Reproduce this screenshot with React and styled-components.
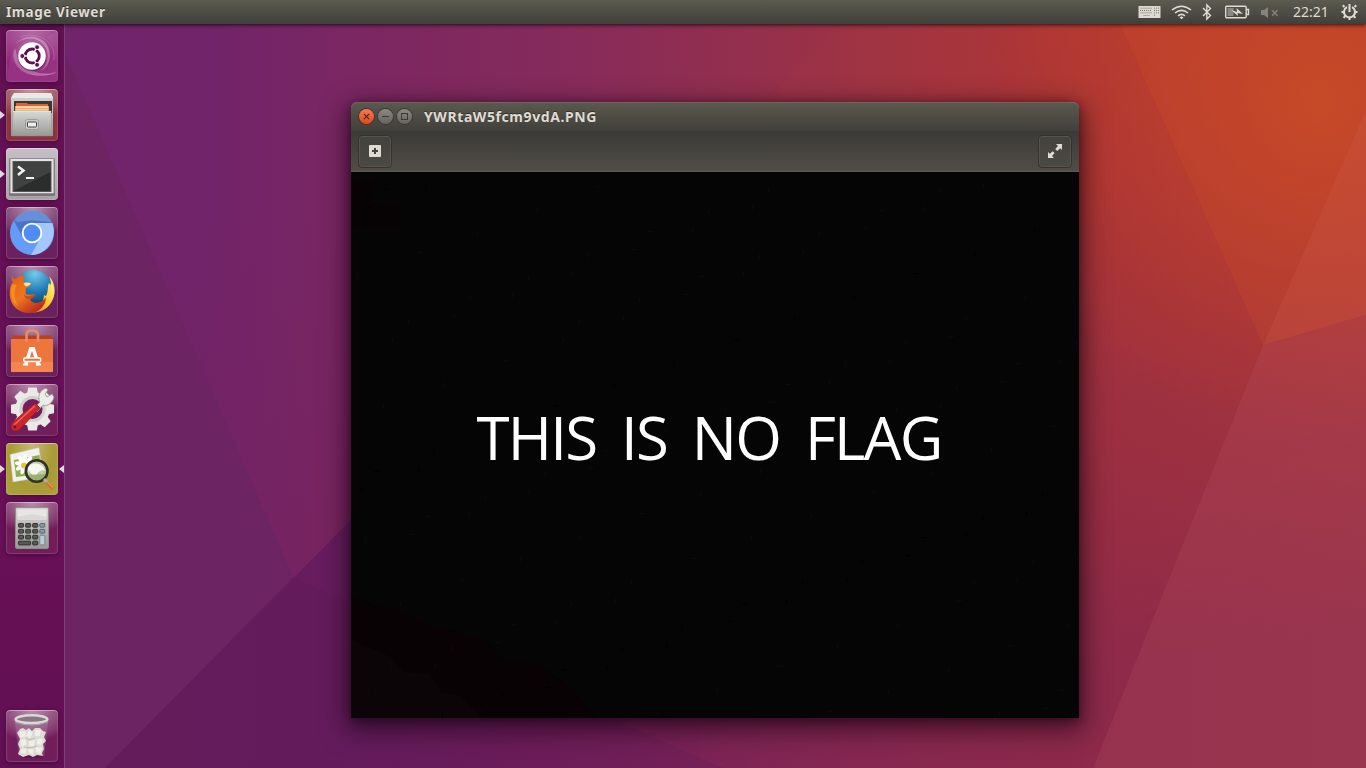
import React from "react";
import styled, { createGlobalStyle, css } from "styled-components";

const GlobalStyle = createGlobalStyle`
  html, body, #root { margin: 0; width: 100%; height: 100%; overflow: hidden; }
  * { box-sizing: border-box; }
`;

const Desktop = styled.div`
  position: relative;
  isolation: isolate;
  display: flex;
  flex-direction: column;
  width: 1366px;
  height: 768px;
  overflow: hidden;
  font-family: "Noto Sans", "Open Sans", sans-serif;
`;

const WallpaperArt = styled.svg`
  position: absolute;
  inset: 0;
  z-index: -1;
`;

const Panel = styled.header`
  position: relative;
  z-index: 2;
  display: flex;
  align-items: center;
  justify-content: space-between;
  flex: none;
  height: 24px;
  padding: 0 7px 0 6px;
  background: linear-gradient(#5c5b51, #403f3a);
  box-shadow: 0 1px 4px rgba(0, 0, 0, 0.75);
  color: #dfdbd2;
`;

const AppName = styled.span`
  font: 700 13.5px/24px "Noto Sans", sans-serif;
  letter-spacing: 0.56px;
  text-shadow: 0 -1px 0 rgba(0, 0, 0, 0.4);
`;

const Indicators = styled.div`
  display: flex;
  align-items: center;
`;

const Indicator = styled.svg`
  display: block;
  flex: none;
  margin-right: ${(p) => p.$gap}px;
`;

const Clock = styled.time`
  width: 37px;
  margin-right: 11px;
  font: 400 14px/24px "Noto Sans", sans-serif;
`;

const Workspace = styled.div`
  display: flex;
  flex: 1;
  min-height: 0;
`;

const Launcher = styled.nav`
  display: flex;
  flex-direction: column;
  justify-content: space-between;
  width: 65px;
  padding: 6px 0;
  background: linear-gradient(#611052, #690f59 60%, #621052);
  border-right: 1px solid #7c4079;
`;

const LauncherGroup = styled.div`
  display: flex;
  flex-direction: column;
  gap: 7px;
`;

const LauncherRow = styled.div`
  display: flex;
  align-items: center;
  justify-content: space-between;
  height: 52px;
`;

const pip = css`
  border-top: 4px solid transparent;
  border-bottom: 4px solid transparent;
`;

const RunningPip = styled.i`
  width: 6px;
  ${pip}
  border-left: 5px solid ${(p) => (p.$on ? "#dedade" : "transparent")};
`;

const FocusPip = styled.i`
  width: 6px;
  ${pip}
  border-right: 5px solid ${(p) => (p.$on ? "#dedade" : "transparent")};
`;

const Tile = styled.div`
  width: 52px;
  height: 52px;
  overflow: hidden;
  border-radius: 4px;
  background: ${(p) => p.$fill};
  box-shadow: inset 0 0 0 1px rgba(255, 255, 255, 0.14), inset 0 1px 0 rgba(255, 255, 255, 0.3),
    0 1px 4px rgba(0, 0, 0, 0.35);
  svg { display: block; }
`;

const Stage = styled.main`
  flex: 1;
  padding: 78px 0 0 286px;
`;

const Window = styled.section`
  display: flex;
  flex-direction: column;
  width: 728px;
  height: 616px;
  border-radius: 6px 6px 0 0;
  box-shadow: 0 8px 26px 4px rgba(15, 0, 12, 0.6), 0 2px 8px rgba(15, 0, 12, 0.4);
`;

const TitleBar = styled.div`
  display: flex;
  align-items: center;
  flex: none;
  height: 29px;
  padding-left: 8px;
  border-radius: 6px 6px 0 0;
  background: linear-gradient(#5b594f, #403f3a);
  box-shadow: inset 0 1px 0 #6b695f;
`;

const WindowButton = styled.span`
  display: flex;
  width: 15px;
  height: 15px;
  margin-right: 4px;
  border-radius: 50%;
  background: ${(p) => (p.$close ? "linear-gradient(#f57b53, #df4b17)" : "linear-gradient(#8b8981, #65635b)")};
  box-shadow: 0 0 0 1px ${(p) => (p.$close ? "#45352c" : "#3a3934")};
`;

const Title = styled.h1`
  margin: 1px 0 0 8px;
  color: #dfdbd2;
  font: 700 14px/28px "Noto Sans", sans-serif;
  letter-spacing: 0.58px;
  text-shadow: 0 -1px 0 rgba(0, 0, 0, 0.4);
`;

const ToolBar = styled.div`
  display: flex;
  align-items: flex-start;
  justify-content: space-between;
  flex: none;
  height: 41px;
  padding: 4px 7px 0;
  background: linear-gradient(#3b3a36, #504e46);
  border-bottom: 1px solid #5c5a52;
`;

const ToolButton = styled.span`
  display: flex;
  width: 34px;
  height: 33px;
  border: 1px solid #34332f;
  border-radius: 4px;
  background: linear-gradient(#43423d, #4a4942);
  box-shadow: inset 0 0 0 1px #55534c;
  svg { display: block; margin: -1px; }
`;

const Picture = styled.div`
  position: relative;
  display: flex;
  justify-content: center;
  flex: 1;
  background: #050505;
  overflow: hidden;
`;

const Noise = styled.svg`
  position: absolute;
  inset: 0;
`;

const Message = styled.div`
  position: relative;
  width: 476px;
  padding-top: 221px;
  margin-left: -1px;
  color: #fff;
  font: 400 60px/88px "Open Sans", sans-serif;
  white-space: pre;
  letter-spacing: -1.8px;
  word-spacing: 11px;
`;

function Wallpaper() {
  return (
    <WallpaperArt width="1366" height="768">
      <defs>
        <linearGradient id="base" gradientUnits="userSpaceOnUse" x1="0" y1="0" x2="1366" y2="0">
          <stop offset="0" stopColor="#70246b" />
          <stop offset="0.15" stopColor="#71246a" />
          <stop offset="0.26" stopColor="#7b2762" />
          <stop offset="0.42" stopColor="#862b5b" />
          <stop offset="0.62" stopColor="#9c3245" />
          <stop offset="0.82" stopColor="#b43830" />
          <stop offset="1" stopColor="#c0412d" />
        </linearGradient>
        <linearGradient id="low" gradientUnits="userSpaceOnUse" x1="500" y1="150" x2="620" y2="768">
          <stop offset="0" stopColor="#74205a" stopOpacity="0" />
          <stop offset="1" stopColor="#74205a" stopOpacity="0.64" />
        </linearGradient>
        <radialGradient id="glow" gradientUnits="userSpaceOnUse" cx="1320" cy="100" r="330">
          <stop offset="0" stopColor="#c64927" />
          <stop offset="0.4" stopColor="#c24329" stopOpacity="0.6" />
          <stop offset="1" stopColor="#bc3c2a" stopOpacity="0" />
        </radialGradient>
        <linearGradient id="plum" gradientUnits="userSpaceOnUse" x1="100" y1="0" x2="1000" y2="0">
          <stop offset="0" stopColor="#671d5d" />
          <stop offset="0.3" stopColor="#671c5f" />
          <stop offset="0.5" stopColor="#701e5a" />
          <stop offset="1" stopColor="#8a2850" stopOpacity="0" />
        </linearGradient>
        <linearGradient id="ridge" gradientUnits="userSpaceOnUse" x1="293" y1="0" x2="723" y2="0">
          <stop offset="0" stopColor="#5f1a56" stopOpacity="0.35" />
          <stop offset="1" stopColor="#641b54" stopOpacity="0.3" />
        </linearGradient>
      </defs>
      <rect width="1366" height="768" fill="url(#base)" />
      <rect width="1366" height="768" fill="url(#low)" />
      <rect width="1366" height="768" fill="url(#glow)" />
      <path d="M0 0 64 52 293 577 105 768H0Z" fill="#6c2463" />
      <path d="M842 24H1120L1263 345 1093 768H700V167Z" fill="#b33b3d" opacity=".08" />
      <path d="M351 520 105 768H1093V520Z" fill="url(#plum)" />
      <path d="M293 577 723 768H105Z" fill="url(#ridge)" />
      <path d="M1120 24H1366V110L1263 345Z" fill="#c84e29" opacity=".26" />
      <path d="M1366 110V315L1263 345Z" fill="#ce563e" opacity=".42" />
      <path d="M1263 345 1366 315V768H1093Z" fill="#b8525c" opacity=".26" />
    </WallpaperArt>
  );
}

const Icon = ({ children }) => (
  <svg width="52" height="52" viewBox="0 0 52 52">
    <defs>
      <linearGradient id="metal" x1="0" y1="0" x2="0" y2="1">
        <stop stopColor="#d8d8d6" />
        <stop offset="1" stopColor="#989895" />
      </linearGradient>
    </defs>
    {children}
  </svg>
);

const DashIcon = () => (
  <Icon>
    <path d="M2 50C1 18 20 3 36 11 48 18 43 36 33 41 48 35 52 20 41 7L51 1V51H3Z" fill="#fff" opacity=".06" />
    <path d="M9 15C19 1 44 5 44 26 44 34 39 39 34 41 46 33 44 12 28 9 19 8 12 11 9 15Z" fill="#fff" opacity=".3" />
    <path d="M9 18C3 36 22 52 51 43 30 46 14 38 11 26Z" fill="#fff" opacity=".26" />
    <path d="M14 7C30 1 50 10 48 30M8 20C4 40 26 51 50 42" fill="none" stroke="#e5a5d4" strokeOpacity=".3" />
    <circle cx="26" cy="27" r="14.2" fill="#430c3b" opacity=".4" />
    <circle cx="26" cy="26" r="13.8" fill="#fff" />
    <circle cx="26.2" cy="26" r="7" fill="none" stroke="#5e1049" strokeWidth="3" />
    <path d="M26 26 16 26M26 26 31 17M26 26 31 35" stroke="#fff" strokeWidth="1.4" />
    <circle cx="26.2" cy="26" r="5.3" fill="#fff" />
    {[[16.3, 26], [31.1, 17.2], [31.1, 34.8]].map(([x, y]) => (
      <circle key={y} cx={x} cy={y} r="2.4" fill="#5e1049" stroke="#fff" strokeWidth=".8" />
    ))}
  </Icon>
);

const FilesIcon = () => (
  <Icon>
    <path d="M8 4H45L47 9V47H5V9Z" fill="url(#metal)" />
    <path d="M8 4H45L47 9H5Z" fill="#e9e9e7" />
    <path d="M8 12H46V24H8Z" fill="#393836" />
    <path d="M10 14H21L22 15H42V22H10Z" fill="#d8632d" />
    <path d="M9 17H43V24H9Z" fill="#f2a45b" />
    <path d="M10 17.5H42V18.7H10ZM10 20.5H42V21.5H10Z" fill="#fff0d9" />
    <path d="M7 22H45L46 47H6Z" fill="url(#metal)" stroke="#8f8f8c" strokeWidth=".5" />
    <path d="M7 22.5H45" stroke="#e3e3e2" />
    <rect x="19.5" y="30.5" width="13" height="10" rx="2" fill="#cacac7" stroke="#9d9d98" />
    <rect x="21.5" y="33" width="9" height="5" rx="1" fill="#eee" stroke="#444" />
  </Icon>
);

const TerminalIcon = () => (
  <Icon>
    <rect x="3" y="10" width="46" height="38" rx="1.5" fill="#77747a" />
    <rect x="4" y="10.5" width="44" height="35" rx="1" fill="#e4e4e2" stroke="#8e8d8e" />
    <rect x="7" y="13.5" width="38" height="30" fill="#2b2d2c" stroke="#555" />
    <path d="M7.5 14H44.5V24L7.5 43Z" fill="#fff" opacity=".1" />
    <path d="M12 18.5 17.5 22.5 12 27" fill="none" stroke="#f2f2ef" strokeWidth="2.5" />
    <path d="M20 30H28" stroke="#f2f2ef" strokeWidth="2" />
  </Icon>
);

const ChromiumIcon = () => (
  <Icon>
    <circle cx="26" cy="26" r="22" fill="#659cf7" />
    <path d="M8 14C17-1 40 1 46.5 16H26L17 31Z" fill="#4a72c6" />
    <path d="M8.5 13.5C17-1 38 0 45.5 15L26 13.5 12 15Z" fill="#7fa2e4" opacity=".6" />
    <path d="M26 16H46.4C52 31 41 48 25 48L35 30Z" fill="#a3c6fc" />
    <circle cx="26" cy="26" r="10.3" fill="#fff" />
    <circle cx="26" cy="26" r="8.4" fill="#4f8df4" />
  </Icon>
);

const FirefoxIcon = () => (
  <Icon>
    <defs>
      <radialGradient id="globe" cx=".55" cy=".1" r=".9">
        <stop stopColor="#72cce9" />
        <stop offset=".5" stopColor="#247eb9" />
        <stop offset="1" stopColor="#07345f" />
      </radialGradient>
      <linearGradient id="fox" x1="0" y1="0" x2=".7" y2="1">
        <stop stopColor="#e0600f" />
        <stop offset=".55" stopColor="#ef7521" />
        <stop offset="1" stopColor="#b9291c" />
      </linearGradient>
      <linearGradient id="tail" x1="1" y1="0" x2="0" y2="1">
        <stop stopColor="#fff59a" />
        <stop offset=".55" stopColor="#ffc62c" />
        <stop offset="1" stopColor="#e65317" />
      </linearGradient>
    </defs>
    <circle cx="27" cy="23" r="19" fill="url(#globe)" />
    <path d="M43 10C49 17 50 26 47 33 43 43 33 48 23 46 33 43 38 36 38 29L40 30C43 24 41 21 43 17L45 19C45 15 44 13 43 10Z" fill="url(#tail)" />
    <path d="M6 9C7 13 9 14 11 12 14 9 16 9 19 9 17 12 17 14 18 16L25 17C25 20 22 21 20 22 20 24 19 25 20 28 24 30 27 27 30 29 28 31 26 32 24 34 29 39 36 37 40 31 40 41 31 48 22 47 9 46 2 35 4 23 4 20 6 18 7 16 5 14 6 11 6 9Z" fill="url(#fox)" />
    <path d="M19 16.5 25 17C24 19.5 22 20 20 20.5L17.5 18Z" fill="#ffe3a2" />
    <path d="M6 18C3 27 6 36 12 40 7 31 8 24 11 19Z" fill="#ffad28" opacity=".5" />
    <path d="M18 28C22 33 27 28 30 29L26 33C21 34 18 32 18 28Z" fill="#9f3c16" opacity=".5" />
  </Icon>
);

const SoftwareIcon = () => (
  <Icon>
    <path d="M7 10.5H45L47 15H5Z" fill="#b8421c" />
    <path d="M5 14H47V47H5Z" fill="#ed763e" />
    <path d="M5 37H47V47H5Z" fill="#ff9861" opacity=".45" />
    <path d="M20.5 17V9Q20.5 5.5 25.8 5.5T32 9V17" fill="none" stroke="#e78c6c" strokeWidth="2.5" />
    <path d="M19.6 40 24.7 23.7H27.3L32.4 40" fill="none" stroke="#fff" strokeWidth="3.6" />
    <path d="M17 39.5H22M30 39.5H35" stroke="#fff" strokeWidth="2" />
    <rect x="17.8" y="33" width="16.8" height="3.4" rx="1" fill="#ed6f35" stroke="#fff" strokeWidth="1.5" />
  </Icon>
);

const SettingsIcon = () => (
  <Icon>
    <g fill="#e9e9e6">
      {[0, 45, 90, 135, 180, 225, 270, 315].map((a) => (
        <path key={a} d="M21 10 22.2 3.5H30.8L32 10Z" transform={`rotate(${a} 26.5 25)`} />
      ))}
      <circle cx="26.5" cy="25" r="17.3" />
    </g>
    <circle cx="26.5" cy="25" r="13" fill="#d0d0cd" />
    <circle cx="26.5" cy="25" r="10" fill="#751c60" />
    <path d="M27 25 34 18C31 12 34 6 40 4L42 6 39 10 41 13 46 10 48 13C47 19 41 23 37 21L31 28Z" fill="#ecece9" stroke="#94948f" strokeWidth=".8" />
    <path d="M29 19 34 24 14 45C9 50 2 45 6 39Z" fill="#cc2629" stroke="#8f1820" strokeWidth=".8" />
    <path d="M29 21.8 8 41" stroke="#ee6260" strokeWidth="1.5" />
    <circle cx="9" cy="42.8" r="1.4" fill="#5a1739" />
  </Icon>
);

const ViewerIcon = () => (
  <Icon>
    <path d="M4 11.5 33 4.5 37 34 7 39Z" fill="#f1f2eb" stroke="#c3c3b8" strokeWidth=".5" />
    <path d="M8 17 33.5 12 35 31 10 34Z" fill="#8eaf4b" />
    <g fill="#fff">
      {[0, 40, 80, 120, 160, 200, 240, 280, 320].map((a) => (
        <ellipse key={a} cx="19" cy="15.8" rx="2.2" ry="4.6" transform={`rotate(${a} 19 21.5)`} />
      ))}
    </g>
    <circle cx="18" cy="22.5" r="3" fill="#efc526" />
    <circle cx="30.7" cy="28" r="10.5" fill="#c9cda8" opacity=".85" />
    <path d="M21 26C26 17 38 20 39 28 35 25 31 31 29 33 25 32 24 28 21 26Z" fill="#fff" opacity=".85" />
    <path d="M21 32 39 31C38 36 34 38 30 38 26 38 23 36 21 32Z" fill="#90a95e" opacity=".8" />
    <circle cx="30.7" cy="28" r="10.8" fill="none" stroke="#2c3030" strokeWidth="2.6" />
    <path d="M38 36 42 40" stroke="#b0b0aa" strokeWidth="3" />
    <path d="M40.5 39 47 46" stroke="#ca7735" strokeWidth="4" />
    <path d="M41 38.5 47 44.5" stroke="#ecb077" strokeWidth="1" />
  </Icon>
);

const CalculatorIcon = () => (
  <Icon>
    <rect x="9.5" y="5.5" width="33" height="41" rx="1.5" fill="url(#metal)" stroke="#8d8f8b" />
    <rect x="11.5" y="7.5" width="29" height="10.5" rx="1" fill="#e6e6e3" />
    <path d="M12 15Q26 10 40 15V18H12Z" fill="#cacaca" opacity=".5" />
    {[0, 1, 2, 3].flatMap((r) =>
      [0, 1, 2, 3].map((c) => {
        if ((c === 3 && r > 1) || (r === 3 && c < 2)) return null;
        return <rect key={`${r}-${c}`} x={12.5 + c * 7.1} y={21.5 + r * 5.9} width="5" height="3.7" rx=".7" fill={c === 3 ? "#8797a7" : "#555957"} stroke={c === 3 ? "#5c6a75" : "#30332f"} />;
      })
    )}
    <rect x="12.5" y="39.2" width="12.1" height="3.7" rx=".7" fill="#555957" stroke="#30332f" />
    <rect x="33.8" y="33.3" width="5" height="9.6" rx=".7" fill="#bdcbd5" stroke="#778590" />
  </Icon>
);

const TrashIcon = () => (
  <Icon>
    <path d="M9 10H42L38 46Q25 51 13 46Z" fill="#e0d3e0" opacity=".16" stroke="#ded7de" strokeOpacity=".5" />
    <ellipse cx="25.5" cy="46" rx="12" ry="2.4" fill="#4c0b3e" opacity=".7" />
    <path d="M11 23 14 19 17 18 20 20 23 18 26 21 29 18 34 18 37 21 40 22 38 27 40 31 37 34 38 39 36 43 37 46 31 45 27 47 23 45 17 47 12 44 14 39 12 34 14 29Z" fill="#dcdbd4" />
    <path d="M14 21 20 22 19 27 14 27ZM23 20 27 23 24 28 20 26ZM29 20 35 20 34 26 29 26ZM14 30 19 29 21 34 16 37ZM23 31 29 30 28 36 23 36ZM31 29 37 29 35 35 31 34ZM15 39 20 38 20 44 15 43ZM22 39 28 39 27 45 23 43ZM30 37 36 38 34 44 30 42Z" fill="#efeee8" />
    <path d="M20 28 23 30 29 28M18 37 24 38 31 36" stroke="#b4b2aa" fill="none" strokeWidth=".8" />
    <ellipse cx="25.5" cy="9.2" rx="15.8" ry="3.9" fill="#8a7587" stroke="#d9d9d5" strokeWidth="2.6" />
    <path d="M9 12Q25 18 42 12" fill="none" stroke="#a3a49d" strokeWidth="1.2" />
  </Icon>
);

const glass = (color) => `radial-gradient(80% 60% at 50% 0, rgba(255,255,255,.5), rgba(255,255,255,.12) 80%, transparent), ${color}`;

const apps = [
  { id: "dash", Art: DashIcon, fill: "radial-gradient(90% 70% at 50% 0, rgba(255,255,255,.32), transparent), #91267c" },
  { id: "files", Art: FilesIcon, fill: glass("#8b343f"), running: true },
  { id: "terminal", Art: TerminalIcon, fill: "linear-gradient(#c6bfc6, #aaa1a9)", running: true },
  { id: "chromium", Art: ChromiumIcon, fill: glass("#6b215d") },
  { id: "firefox", Art: FirefoxIcon, fill: glass("#6b215d") },
  { id: "software", Art: SoftwareIcon, fill: glass("#6b215d") },
  { id: "settings", Art: SettingsIcon, fill: glass("#721e5c") },
  { id: "viewer", Art: ViewerIcon, fill: "radial-gradient(ellipse at 50% 0, #c4b878, #a99b34 60%, #aaa23e)", running: true, focused: true },
  { id: "calculator", Art: CalculatorIcon, fill: glass("#721c5a") },
];

function LauncherItem({ app }) {
  return (
    <LauncherRow>
      <RunningPip $on={app.running} />
      <Tile $fill={app.fill}><app.Art /></Tile>
      <FocusPip $on={app.focused} />
    </LauncherRow>
  );
}

function StatusIcons() {
  const c = "#dfdbd2";
  return (
    <Indicators>
      <Indicator $gap={10} width="23" height="24">
        <rect x="0.5" y="6" width="22" height="12" fill="#dcd9d2" />
        <path d="M2.5 8.2H14.5M2 10.5H14M2.5 12.8H14.5M16 8.2H21M16 10.5H21M16 12.8H21M16 15.2H18" stroke="#77756e" strokeWidth="1" strokeDasharray="1 1" />
        <path d="M5 15.5H12" stroke="#aaa8a0" />
      </Indicator>
      <Indicator $gap={10} width="21" height="24" fill="none" stroke={c} strokeWidth="1.6">
        <path d="M1 10Q10.5 2.4 20 10M4 13Q10.5 7.6 17 13M7 15.9Q10.5 12.9 14 15.9" />
        <path d="M8.5 17.4 10.5 19.2 12.5 17.4 10.5 16.2Z" fill={c} stroke="none" />
      </Indicator>
      <Indicator $gap={13} width="10" height="24" fill="none" stroke={c} strokeWidth="1.4">
        <path d="M1 8 8.5 15.5 4.8 19V5L8.5 8.5 1 16" />
      </Indicator>
      <Indicator $gap={11} width="25" height="24" fill="none" stroke={c} strokeWidth="1.4">
        <rect x="0.7" y="6.2" width="20.5" height="11.6" rx="1" />
        <path d="M21.5 9.5H23.5V14.5H21.5" />
        <rect x="2.5" y="8" width="6" height="8" fill="#898780" stroke="none" />
        <path d="M6 10 12 12 11.5 8 18 14 12.5 13 13 16Z" fill={c} stroke="none" />
      </Indicator>
      <Indicator $gap={13} width="19" height="24" fill="#85837b" stroke="#85837b">
        <path d="M0 10H3L7 7V18L3 15H0Z" stroke="none" />
        <path d="M11 10.2 16.5 15.7M16.5 10.2 11 15.7" strokeWidth="1.5" />
      </Indicator>
      <Clock>22:21</Clock>
      <Indicator $gap={1} width="17" height="24" fill="none" stroke={c} strokeWidth="2">
        <path d="M6 7.1A5.5 5.5 0 1 0 11 7.1M8.5 4V12" />
        <path d="M3.5 7 1.8 5.3M13.5 7 15.2 5.3M3 12H.5M14 12H16.5M4.3 16 2.6 17.9M12.7 16 14.4 17.9M8.5 17.5V20" />
      </Indicator>
    </Indicators>
  );
}

const flecks = Array.from({ length: 150 }, (_, i) => ({
  x: (i * 197 + 31) % 728,
  y: (i * 131 + 17) % 546,
  w: i % 3 ? 1 : 5,
  h: i % 3 ? 5 : 1,
}));

function PictureNoise() {
  return (
    <Noise width="728" height="546">
      <path d="M0 420 22 434 50 438 86 456 130 465 150 486 190 494 220 516 245 546H0Z" fill="#080205" />
      <path d="M0 468 20 476 40 485 52 500 78 502 90 520 110 524 130 546H0Z" fill="#0b0507" />
      <path d="M0 8H22V32H48V58H0Z" fill="#070204" />
      {flecks.map((f, i) => <rect key={i} x={f.x} y={f.y} width={f.w} height={f.h} fill={i % 4 ? "#0a0a0a" : "#000"} />)}
    </Noise>
  );
}

export default function App() {
  return (
    <Desktop>
      <GlobalStyle />
      <Wallpaper />
      <Panel>
        <AppName>Image Viewer</AppName>
        <StatusIcons />
      </Panel>
      <Workspace>
        <Launcher>
          <LauncherGroup>
            {apps.map((app) => <LauncherItem key={app.id} app={app} />)}
          </LauncherGroup>
          <LauncherItem app={{ Art: TrashIcon, fill: glass("#721e5c") }} />
        </Launcher>
        <Stage>
          <Window>
            <TitleBar>
              <WindowButton $close>
                <svg width="15" height="15" stroke="#51271a" strokeWidth="1.2"><path d="M4.8 4.8 10.2 10.2M10.2 4.8 4.8 10.2" /></svg>
              </WindowButton>
              <WindowButton>
                <svg width="15" height="15" stroke="#3a3934"><path d="M4 7.5H11" /></svg>
              </WindowButton>
              <WindowButton>
                <svg width="15" height="15" stroke="#3a3934" fill="none"><rect x="4.5" y="4.5" width="6" height="6" /></svg>
              </WindowButton>
              <Title>YWRtaW5fcm9vdA.PNG</Title>
            </TitleBar>
            <ToolBar>
              <ToolButton>
                <svg width="34" height="33">
                  <rect x="11" y="10" width="12" height="12" rx="1" fill="#dfdbd2" />
                  <path d="M17 13V19M14 16H20" stroke="#44433e" strokeWidth="2" />
                </svg>
              </ToolButton>
              <ToolButton>
                <svg width="34" height="33" fill="#dfdbd2">
                  <path d="M18 9H24V15L22.2 13.2 19.2 16 17.2 14 20 11ZM10 17 11.8 18.8 14.8 16.2 16.6 18 14 21 16 23H10Z" />
                </svg>
              </ToolButton>
            </ToolBar>
            <Picture>
              <PictureNoise />
              <Message>THIS IS NO FLAG</Message>
            </Picture>
          </Window>
        </Stage>
      </Workspace>
    </Desktop>
  );
}
